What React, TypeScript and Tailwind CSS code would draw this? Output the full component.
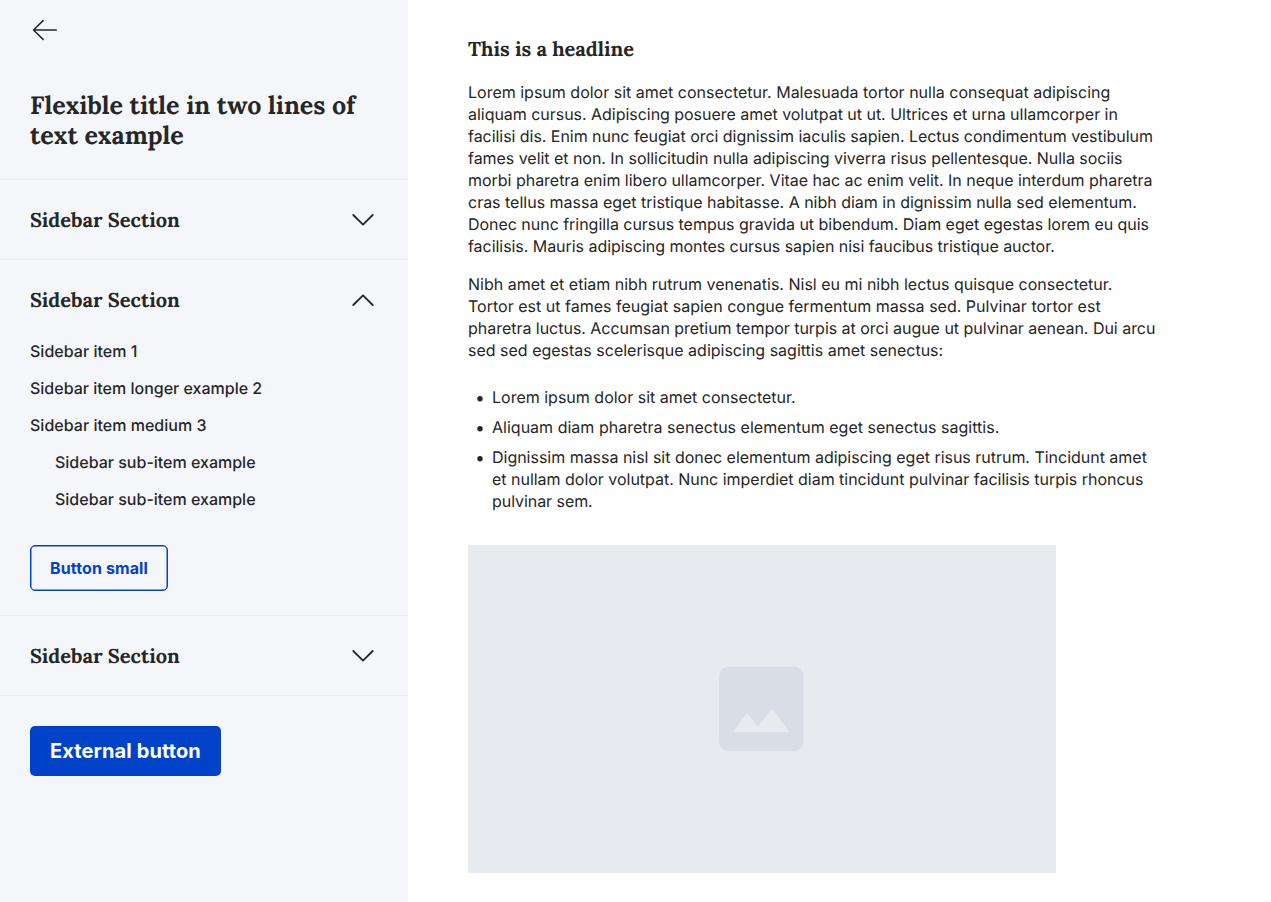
import type { ReactNode } from "react";

const serif = "font-['Lora','Liberation_Serif',serif] font-bold whitespace-nowrap";

type Line = [text: string, tracking?: string];

const intro: Line[] = [
  ["Lorem ipsum dolor sit amet consectetur. Malesuada tortor nulla consequat adipiscing"],
  ["aliquam cursus. Adipiscing posuere amet volutpat ut ut. Ultrices et urna ullamcorper in", "tracking-[-0.033px]"],
  ["facilisi dis. Enim nunc feugiat orci dignissim iaculis sapien. Lectus condimentum vestibulum", "tracking-[-0.043px]"],
  ["fames velit et non. In sollicitudin nulla adipiscing viverra risus pellentesque. Nulla sociis", "tracking-[-0.038px]"],
  ["morbi pharetra enim libero ullamcorper. Vitae hac ac enim velit. In neque interdum pharetra", "tracking-[-0.022px]"],
  ["cras tellus massa eget tristique habitasse. A nibh diam in dignissim nulla sed elementum.", "tracking-[-0.008px]"],
  ["Donec nunc fringilla cursus tempus gravida ut bibendum. Diam eget egestas lorem eu quis", "tracking-[-0.033px]"],
  ["facilisis. Mauris adipiscing montes cursus sapien nisi faucibus tristique auctor.", "tracking-[-0.047px]"],
];

const details: Line[] = [
  ["Nibh amet et etiam nibh rutrum venenatis. Nisl eu mi nibh lectus quisque consectetur."],
  ["Tortor est ut fames feugiat sapien congue fermentum massa sed. Pulvinar tortor est", "tracking-[0.01px]"],
  ["pharetra luctus. Accumsan pretium tempor turpis at orci augue ut pulvinar aenean. Dui arcu", "tracking-[-0.026px]"],
  ["sed sed egestas scelerisque adipiscing sagittis amet senectus:"],
];

const bullets: Line[][] = [
  [["Lorem ipsum dolor sit amet consectetur."]],
  [["Aliquam diam pharetra senectus elementum eget senectus sagittis.", "tracking-[0.015px]"]],
  [
    ["Dignissim massa nisl sit donec elementum adipiscing eget risus rutrum. Tincidunt amet", "tracking-[-0.02px]"],
    ["et nullam dolor volutpat. Nunc imperdiet diam tincidunt pulvinar facilisis turpis rhoncus", "tracking-[-0.02px]"],
    ["pulvinar sem.", "tracking-[-0.06px]"],
  ],
];

function Chevron({ up = false }: { up?: boolean }) {
  return (
    <svg width="22" height="12" viewBox="0 0 22 12" fill="none" stroke="#262626" strokeWidth="1.8" strokeLinecap="round" strokeLinejoin="round" className="overflow-visible">
      <path d={up ? "M1.3 11 11 1.3 20.7 11" : "M1.3 1 11 10.7 20.7 1"} />
    </svg>
  );
}

function SectionHead({ up = false }: { up?: boolean }) {
  return (
    <div className="flex h-20 items-center justify-between pl-[30px] pr-[34px]">
      <h2 className={`${serif} pt-[2px] text-[20px] leading-[30px]`}>Sidebar Section</h2>
      <Chevron up={up} />
    </div>
  );
}

function Lines({ lines }: { lines: Line[] }) {
  return (
    <p className="whitespace-nowrap text-[16px] leading-[22px]">
      {lines.map(([text, tracking = ""]) => <span key={text} className={`block ${tracking}`}>{text}</span>)}
    </p>
  );
}

function Bullet({ children }: { children: ReactNode }) {
  return (
    <li className="flex">
      <svg width="6" height="6" viewBox="0 0 6 6" className="ml-[9px] mr-[9px] mt-[10px] shrink-0">
        <circle cx="3" cy="2.8" r="2.7" fill="#262626" />
      </svg>
      {children}
    </li>
  );
}

export default function App() {
  return (
    <div className="flex h-[902px] w-[1271px] overflow-hidden bg-white font-['Inter',sans-serif] text-[#262626] [text-rendering:geometricPrecision]">
      <aside className="w-[408px] shrink-0 bg-[#f4f6fa]">
        <div className="h-[180px] border-b border-[#e7eaee] pl-[30px] pt-[19px]">
          <svg width="30" height="22" viewBox="0 0 30 22" fill="none" stroke="#262626" strokeWidth="1.5" strokeLinecap="round" strokeLinejoin="round">
            <path d="M13.1 1.6 3.5 11 13.1 20.4M3.5 11H26.3" />
          </svg>
          <h1 className={`${serif} mt-[49px] text-[25px] leading-[30px]`}>
            Flexible title in two lines of<br />text example
          </h1>
        </div>
        <section className="h-20 border-b border-[#e7eaee]"><SectionHead /></section>
        <section className="h-[356px] border-b border-[#e7eaee]">
          <SectionHead up />
          <ul className="-mt-[7px] pl-[30px] text-[16px] font-medium leading-[37px]">
            <li className="tracking-[0.03px]">Sidebar item 1</li>
            <li>Sidebar item longer example 2</li>
            <li className="tracking-[0.02px]">Sidebar item medium 3</li>
            <li className="pl-[25px]">Sidebar sub-item example</li>
            <li className="pl-[25px]">Sidebar sub-item example</li>
          </ul>
          <button className="ml-[30px] mt-[27px] block h-[46px] w-[138px] whitespace-nowrap rounded-[5px] border border-[#0043c8] text-[16px] font-bold tracking-[0.11px] text-[#0043c8] shadow-[inset_0_0_0_0.5px_#0043c8]">Button small</button>
        </section>
        <section className="h-20 border-b border-[#e7eaee]"><SectionHead /></section>
        <button className="ml-[30px] mt-[30px] block h-[50px] w-[191px] whitespace-nowrap rounded-[5px] bg-[#0043c8] text-[20px] font-bold tracking-[0.12px] text-white">External button</button>
      </aside>
      <main className="pl-[60px] pt-[35px]">
        <h2 className={`${serif} text-[20px] leading-[30px]`}>This is a headline</h2>
        <div className="mt-4 flex flex-col gap-4">
          <Lines lines={intro} />
          <Lines lines={details} />
        </div>
        <ul className="mt-[25px] flex flex-col gap-2">
          {bullets.map((lines) => <Bullet key={lines[0][0]}><Lines lines={lines} /></Bullet>)}
        </ul>
        <div className="mt-[33px] flex h-[328px] w-[588px] items-center justify-center bg-[#e7ebef] pb-px pr-[2px]">
          <svg width="85" height="85" viewBox="0 0 85 85">
            <rect x="0" y="0.5" width="84.5" height="84.5" rx="9" fill="#d9dee6" />
            <path d="M14 66 28 47 38.7 61 53 42.6 70.5 66Z" fill="#e7ebef" />
          </svg>
        </div>
      </main>
    </div>
  );
}
